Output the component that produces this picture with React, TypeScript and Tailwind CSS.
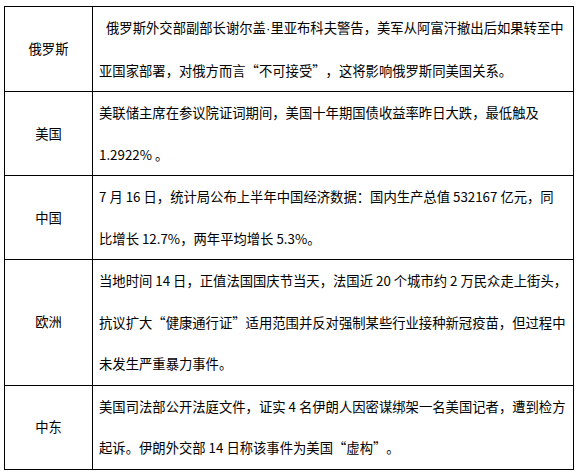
import React from "react";

type Row = { label: string; lines: React.ReactNode[]; indent?: boolean };

const dot = (
  <span style={{ fontFamily: '"Liberation Sans", sans-serif' }}>·</span>
);

const rows: Row[] = [
  {
    label: "俄罗斯",
    indent: true,
    lines: [
      <>
        俄罗斯外交部副部长谢尔盖{dot}里亚布科夫警告，美军从阿富汗撤出后如果转至中
      </>,
      "亚国家部署，对俄方而言“不可接受”，这将影响俄罗斯同美国关系。",
    ],
  },
  {
    label: "美国",
    lines: [
      "美联储主席在参议院证词期间，美国十年期国债收益率昨日大跌，最低触及",
      "1.2922% 。",
    ],
  },
  {
    label: "中国",
    lines: [
      "7 月 16 日，统计局公布上半年中国经济数据：国内生产总值 532167 亿元，同",
      "比增长 12.7%，两年平均增长 5.3%。",
    ],
  },
  {
    label: "欧洲",
    lines: [
      "当地时间 14 日，正值法国国庆节当天，法国近 20 个城市约 2 万民众走上街头，",
      "抗议扩大“健康通行证”适用范围并反对强制某些行业接种新冠疫苗，但过程中",
      "未发生严重暴力事件。",
    ],
  },
  {
    label: "中东",
    lines: [
      "美国司法部公开法庭文件，证实 4 名伊朗人因密谋绑架一名美国记者，遭到检方",
      "起诉。伊朗外交部 14 日称该事件为美国“虚构”。",
    ],
  },
];

export default function App() {
  return (
    <div
      lang="zh-CN"
      className="w-[579px] h-[473px] bg-white text-black overflow-hidden [text-spacing-trim:space-all]"
      style={{ fontFamily: '"Noto Sans CJK SC", "Noto Sans", sans-serif' }}
    >
      <div className="ml-[4px] mt-[6px] w-[570px] border border-black text-[13.33px]">
        {rows.map((r, i) => (
          <div
            key={r.label}
            className={`grid grid-cols-[88px_1fr] ${i > 0 ? "border-t border-black" : ""}`}
          >
            <div className="border-r border-black flex items-center justify-center">
              {r.label}
            </div>
            <div className="pl-[6px] leading-[41.5px]">
              {r.lines.map((l, j) => (
                <div
                  key={j}
                  className={`whitespace-nowrap ${r.indent && j === 0 ? "pl-[7px]" : ""}`}
                >
                  {l}
                </div>
              ))}
            </div>
          </div>
        ))}
      </div>
    </div>
  );
}
